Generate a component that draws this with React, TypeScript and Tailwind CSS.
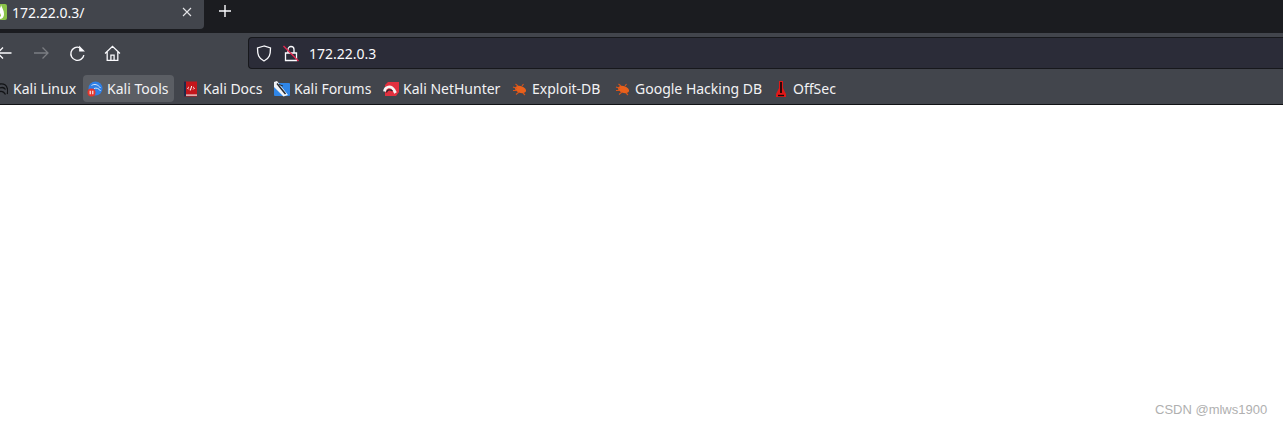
import React from "react";

const Flame = () => (
  <svg width="16" height="16" viewBox="0 0 16 16" className="ml-[-9px] shrink-0">
    <rect width="16" height="16" rx="2" fill="#8bc34a" />
    <path d="M10 1c0 3-2 3-2 6-1 0-1-1-1-2-3 2-4 4-3 6 1 3 3 4 5 4 3 0 4-3 4-5 0-4-2-6-3-9z" fill="#fff" />
    <path d="M9 9c1 1.500 1.500 3-.5 4.500C6.500 12.500 7 10.500 9 9z" fill="#8bc34a" />
  </svg>
);

const Dragon = () => (
  <svg width="16" height="16" viewBox="0 0 16 16" className="shrink-0" fill="none" stroke="#121316" strokeWidth="1.300">
    <g transform="translate(8 0)">
      <path d="M0 3c3-.5 6 1 7 3.500 .8 1.500 .8 4 .3 6.500" />
      <path d="M0 7c2.500-1 4.500 0 5.500 1.500" />
      <path d="M0 10.500c2-.5 4 .5 5.500 3" />
    </g>
  </svg>
);

const Tools = () => (
  <svg width="16" height="16" viewBox="0 0 16 16" className="shrink-0">
    <circle cx="8.500" cy="7.500" r="7" fill="#2f7fe6" />
    <path d="M4.500 4.500c3-2 6.500-1 9 2.500M7 7.500c2.500-1 5 0 6.500 2.500" stroke="#d6e6fb" strokeWidth="1" fill="none" />
    <circle cx="4.500" cy="11.500" r="4" fill="#e5352c" />
    <path d="M3.200 9.800v3.500M5.800 9.800v3.500" stroke="#fff" strokeWidth="1.100" />
  </svg>
);

const Docs = () => (
  <svg width="16" height="16" viewBox="0 0 16 16" className="shrink-0">
    <rect x="1" y="0.500" width="13" height="15" fill="#c4161c" />
    <rect x="1" y="0.500" width="2" height="15" fill="#1e2a4a" />
    <rect x="3" y="13.500" width="11" height="1.200" fill="#e8e8e8" />
    <path d="M5.800 6 4.600 7.200l1.200 1.200M10.200 6l1.200 1.200-1.200 1.200M8.700 5 7.300 9.500" stroke="#fff" strokeWidth="1" fill="none" />
  </svg>
);

const Forums = () => (
  <svg width="16" height="16" viewBox="0 0 16 16" className="shrink-0">
    <rect x="0" y="2" width="16" height="13" rx="1" fill="#2f86e8" />
    <path d="M0 1 3 0 14 14 9.500 15.500 0 6z" fill="#f1f3f6" />
    <path d="M3 2.500 11.500 13" stroke="#23272e" strokeWidth="1.500" />
    <path d="M5 3.500 9 5" stroke="#23272e" strokeWidth="1" />
  </svg>
);

const NetHunter = () => (
  <svg width="16" height="16" viewBox="0 0 16 16" className="shrink-0">
    <path d="M5 1h11v10l-3 4H2V4z" fill="#e2303f" />
    <path d="M1.500 10.500C2 5.500 8 4 11 9l1.500 3" stroke="#f5f5f5" strokeWidth="2.800" fill="none" />
    <path d="M3.500 11.500C4 8.500 7 8 9.500 10" stroke="#22242a" strokeWidth="1.300" fill="none" />
  </svg>
);

const Bug = () => (
  <svg width="16" height="16" viewBox="0 0 16 16" className="shrink-0">
    <ellipse cx="8.500" cy="8.500" rx="5.800" ry="3.400" fill="#e8601c" transform="rotate(18 8.500 8.500)" />
    <path d="M1 6l4 1.500M1 9.500h4M4 13.500l3-2.500M11 12l2 2M6 5 3.500 3M10 5l1.500-2" stroke="#d9541a" strokeWidth="1.100" />
  </svg>
);

const Off = () => (
  <svg width="16" height="16" viewBox="0 0 16 16" className="shrink-0">
    <path d="M6 0h4v7l3 6v3H3v-3l3-6z" fill="#e01818" />
    <path d="M8 1v11" stroke="#1d0606" strokeWidth="1.800" />
    <path d="M5 14.500h6" stroke="#1d0606" strokeWidth="1.400" />
  </svg>
);

const bookmarks: { label: string; icon: React.ReactNode; w: string; active?: boolean }[] = [
  { label: "Kali Tools", icon: <Tools />, w: "w-[91px]", active: true },
  { label: "Kali Docs", icon: <Docs />, w: "w-[86px]" },
  { label: "Kali Forums", icon: <Forums />, w: "w-[104px]" },
  { label: "Kali NetHunter", icon: <NetHunter />, w: "w-[124px]" },
  { label: "Exploit-DB", icon: <Bug />, w: "w-[98px]" },
  { label: "Google Hacking DB", icon: <Bug />, w: "w-[153px]" },
  { label: "OffSec", icon: <Off />, w: "w-[70px]" },
];

export default function App() {
  return (
    <div className="relative h-[425px] w-[1283px] overflow-hidden bg-white font-['Noto_Sans','Open_Sans',sans-serif] text-[14px] text-[#fbfbfe]">
      <div className="flex h-[33px] items-start bg-[#1b1c20]">
        <div className="flex h-[29px] w-[204px] items-center rounded-br-[4px] bg-[#42454c] pb-[5px]">
          <Flame />
          <span className="ml-[5px] flex-1 text-[14px]">172.22.0.3/</span>
          <svg width="10" height="10" viewBox="0 0 10 10" className="mr-[12px]" stroke="#e4e4e8" strokeWidth="1.100">
            <path d="M1 1l8 8M9 1l-8 8" />
          </svg>
        </div>
        <svg width="14" height="14" viewBox="0 0 14 14" className="ml-[14px] mt-[4px]" stroke="#fbfbfe" strokeWidth="1.400">
          <path d="M7 1v12M1 7h12" />
        </svg>
      </div>

      <div className="flex h-[42px] items-center bg-[#42454c] pb-[2px]">
        <svg width="16" height="16" viewBox="0 0 16 16" className="ml-[-4px]" fill="none" stroke="#fbfbfe" strokeWidth="1.300">
          <path d="M1.500 8h14M7 2.500 1.500 8 7 13.500" />
        </svg>
        <svg width="16" height="16" viewBox="0 0 16 16" className="ml-[21px]" fill="none" stroke="#7b7d82" strokeWidth="1.300">
          <path d="M1 8h14M9.500 2.500 15 8l-5.500 5.500" />
        </svg>
        <svg width="17" height="17" viewBox="0 0 16 16" className="ml-[20px]" fill="none" stroke="#fbfbfe" strokeWidth="1.300">
          <path d="M14 9.500A6.200 6.200 0 1 1 10 2.400" />
          <path d="M9.500 .5v5.500h5.500z" fill="#fbfbfe" stroke="none" />
        </svg>
        <svg width="17" height="17" viewBox="0 0 16 16" className="ml-[18px]" fill="none" stroke="#fbfbfe" strokeWidth="1.200">
          <path d="M1 8 8 1.200 15 8M3 6.500v8h10v-8M6.500 14.500V9.500h3v5" />
        </svg>
        <div className="ml-[127px] flex h-[32px] flex-1 items-center rounded-l-[4px] border border-r-0 border-[#17181c] bg-[#2b2c38]">
          <svg width="16" height="17" viewBox="0 0 16 17" className="ml-[7px]" fill="none" stroke="#fbfbfe" strokeWidth="1.300">
            <path d="M8 1 1.500 3c0 6.500 1 10.500 6.500 13 5.500-2.500 6.500-6.500 6.500-13z" />
          </svg>
          <svg width="16" height="17" viewBox="0 0 16 17" className="ml-[11px]" fill="none">
            <path d="M5 8V4.500a3 3 0 0 1 6 0V8M2.500 8h11v7.500h-11z" stroke="#fbfbfe" strokeWidth="1.300" />
            <path d="M.5 1 15.500 16" stroke="#e22850" strokeWidth="1.400" />
          </svg>
          <span className="ml-[10px] text-[14px]">172.22.0.3</span>
        </div>
      </div>

      <div className="flex h-[30px] items-center gap-[5px] border-b border-[#111215] bg-[#42454c] pb-[2px] text-[#f2f2f4]">
        <div className="mr-[-5px] flex h-[27px] w-[83px] shrink-0 items-center">
          <div className="ml-[-8px]">
            <Dragon />
          </div>
          <span className="ml-[5px] whitespace-nowrap">Kali Linux</span>
        </div>
        {bookmarks.map((b) => (
          <div
            key={b.label}
            className={`flex h-[27px] ${b.w} shrink-0 items-center rounded-[4px] pl-[4px] ${b.active ? "bg-[#5b5e64]" : ""}`}
          >
            {b.icon}
            <span className="ml-[4px] whitespace-nowrap">{b.label}</span>
          </div>
        ))}
      </div>

      <div className="absolute left-[1155px] top-[402px] font-['Liberation_Sans',sans-serif] text-[13px] leading-[16px] text-[#b0b0b0]">
        CSDN @mlws1900
      </div>
    </div>
  );
}
